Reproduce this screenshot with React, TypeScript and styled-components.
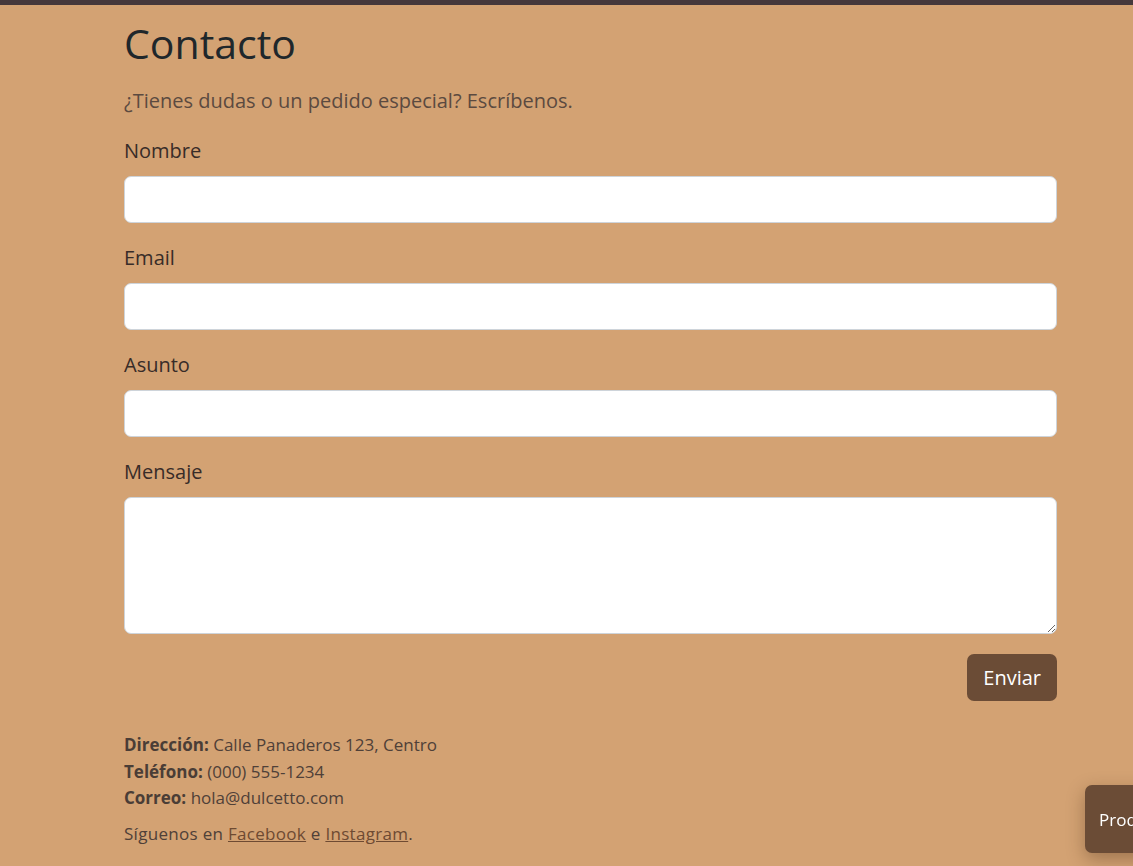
import React from "react";
import styled, { createGlobalStyle } from "styled-components";

const Global = createGlobalStyle`
  html, body { margin: 0; padding: 0; }
  body {
    background: #d3a273;
    font-family: "Open Sans", "Noto Sans", sans-serif;
    color: #3b302b;
    overflow: hidden;
  }
  * { box-sizing: border-box; }
`;

const TopBar = styled.div`
  height: 5px;
  background: #45383b;
`;

const Main = styled.main`
  width: 933px;
  margin: 0 0 0 124px;
  padding-top: 14px;
`;

const Title = styled.h1`
  margin: 0;
  font-size: 41px;
  font-weight: 400;
  line-height: 1.2;
  color: #1f272b;
`;

const Lead = styled.p`
  margin: 18px 0 0;
  font-size: 20px;
  line-height: 30px;
  color: #5b4a40;
`;

const Form = styled.form`
  display: flex;
  flex-direction: column;
  margin-top: 20px;
`;

const Field = styled.div`
  display: flex;
  flex-direction: column;
  margin-bottom: 20px;
`;

const Label = styled.label`
  font-size: 20px;
  line-height: 30px;
  color: #382c28;
  margin-bottom: 10px;
`;

const Input = styled.input`
  height: 47px;
  width: 100%;
  border: 1px solid #ced4da;
  border-radius: 7px;
  background: #fff;
  font: inherit;
  padding: 8px 16px;
`;

const TextArea = styled.textarea`
  height: 137px;
  width: 100%;
  border: 1px solid #ced4da;
  border-radius: 7px;
  background: #fff;
  font: inherit;
  padding: 8px 16px;
  resize: vertical;
`;

const Actions = styled.div`
  display: flex;
  justify-content: flex-end;
`;

const Button = styled.button`
  height: 47px;
  padding: 0 16px;
  background: #6b4c36;
  color: #fff;
  border: none;
  border-radius: 7px;
  font-family: inherit;
  font-size: 20px;
`;

const Info = styled.div`
  margin-top: 31px;
  font-size: 17px;
  line-height: 26.5px;
  color: #4f4038;
`;

const Line = styled.div``;

const Strong = styled.strong`
  font-weight: 700;
  color: #4a3d36;
`;

const Social = styled.p`
  margin: 9px 0 0;
  font-size: 17px;
  line-height: 26.5px;
  letter-spacing: 0.3px;
  color: #4f4038;
`;

const Link = styled.a`
  color: #6e4a32;
  text-decoration: underline;
`;

const Floating = styled.button`
  position: fixed;
  left: 1085px;
  top: 785px;
  height: 68px;
  padding: 0 14px;
  background: #6b4c36;
  color: #fff;
  border: none;
  border-radius: 7px;
  font-family: inherit;
  font-size: 17px;
  box-shadow: 0 6px 18px rgba(60, 35, 15, 0.35);
  white-space: nowrap;
`;

export default function App() {
  return (
    <>
      <Global />
      <TopBar />
      <Main>
        <Title>Contacto</Title>
        <Lead>¿Tienes dudas o un pedido especial? Escríbenos.</Lead>
        <Form onSubmit={(e) => e.preventDefault()}>
          <Field>
            <Label>Nombre</Label>
            <Input type="text" />
          </Field>
          <Field>
            <Label>Email</Label>
            <Input type="email" />
          </Field>
          <Field>
            <Label>Asunto</Label>
            <Input type="text" />
          </Field>
          <Field>
            <Label>Mensaje</Label>
            <TextArea />
          </Field>
          <Actions>
            <Button type="submit">Enviar</Button>
          </Actions>
        </Form>
        <Info>
          <Line><Strong>Dirección:</Strong> Calle Panaderos 123, Centro</Line>
          <Line><Strong>Teléfono:</Strong> (000) 555-1234</Line>
          <Line><Strong>Correo:</Strong> hola@dulcetto.com</Line>
        </Info>
        <Social>
          Síguenos en <Link href="#">Facebook</Link> e <Link href="#">Instagram</Link>.
        </Social>
      </Main>
      <Floating>Productos</Floating>
    </>
  );
}
